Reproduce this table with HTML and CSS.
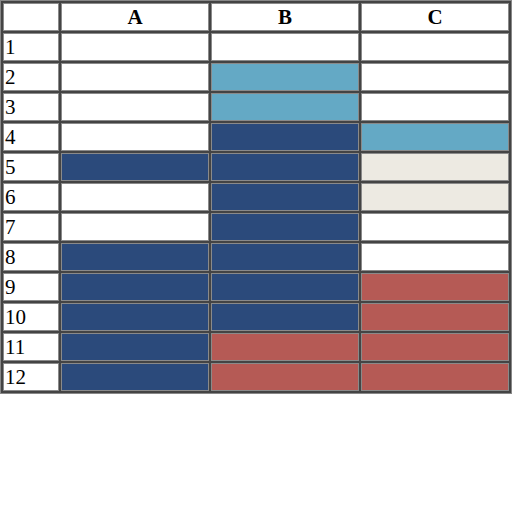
FILE: index.html
```html
<!DOCTYPE html>
<html>
<head>
<meta charset="utf-8">
<link rel="stylesheet" href="styles.css">
</head>
<body>
<table class="grid">
  <thead>
    <tr><th class="corner"></th><th class="col">A</th><th class="col">B</th><th class="col">C</th></tr>
  </thead>
  <tbody>
    <tr><td class="rh">1</td><td></td><td></td><td></td></tr>
    <tr><td class="rh">2</td><td></td><td class="lb"></td><td></td></tr>
    <tr><td class="rh">3</td><td></td><td class="lb"></td><td></td></tr>
    <tr><td class="rh">4</td><td></td><td class="db"></td><td class="lb"></td></tr>
    <tr><td class="rh">5</td><td class="db"></td><td class="db"></td><td class="cr"></td></tr>
    <tr><td class="rh">6</td><td></td><td class="db"></td><td class="cr"></td></tr>
    <tr><td class="rh">7</td><td></td><td class="db"></td><td></td></tr>
    <tr><td class="rh">8</td><td class="db"></td><td class="db"></td><td></td></tr>
    <tr><td class="rh">9</td><td class="db"></td><td class="db"></td><td class="rd"></td></tr>
    <tr><td class="rh">10</td><td class="db"></td><td class="db"></td><td class="rd"></td></tr>
    <tr><td class="rh">11</td><td class="db"></td><td class="rd"></td><td class="rd"></td></tr>
    <tr><td class="rh">12</td><td class="db"></td><td class="rd"></td><td class="rd"></td></tr>
  </tbody>
</table>
</body>
</html>
```
FILE: styles.css
```css
html, body {
  margin: 0;
  padding: 0;
  background: #ffffff;
}
.grid {
  width: 512px;
  table-layout: fixed;
  border-collapse: separate;
  border-spacing: 2px;
  border: 1px solid #888888;
  background: #444444;
  font-family: "Liberation Serif", "Times New Roman", serif;
  font-size: 21px;
  line-height: 24px;
  color: #000;
}
.grid th, .grid td {
  box-sizing: border-box;
  height: 28px;
  padding: 1px;
  border: 1px solid #8a8a8a;
  background: #ffffff;
}
.grid th.corner {
  width: 56px;
}
.grid th.col {
  width: 148px;
  font-weight: bold;
  text-align: center;
}
.grid td.rh {
  text-align: left;
}
.grid td.lb { background: #64a9c5; }
.grid td.db { background: #2b4a7b; }
.grid td.cr { background: #edeae2; }
.grid td.rd { background: #b55a55; }
```
